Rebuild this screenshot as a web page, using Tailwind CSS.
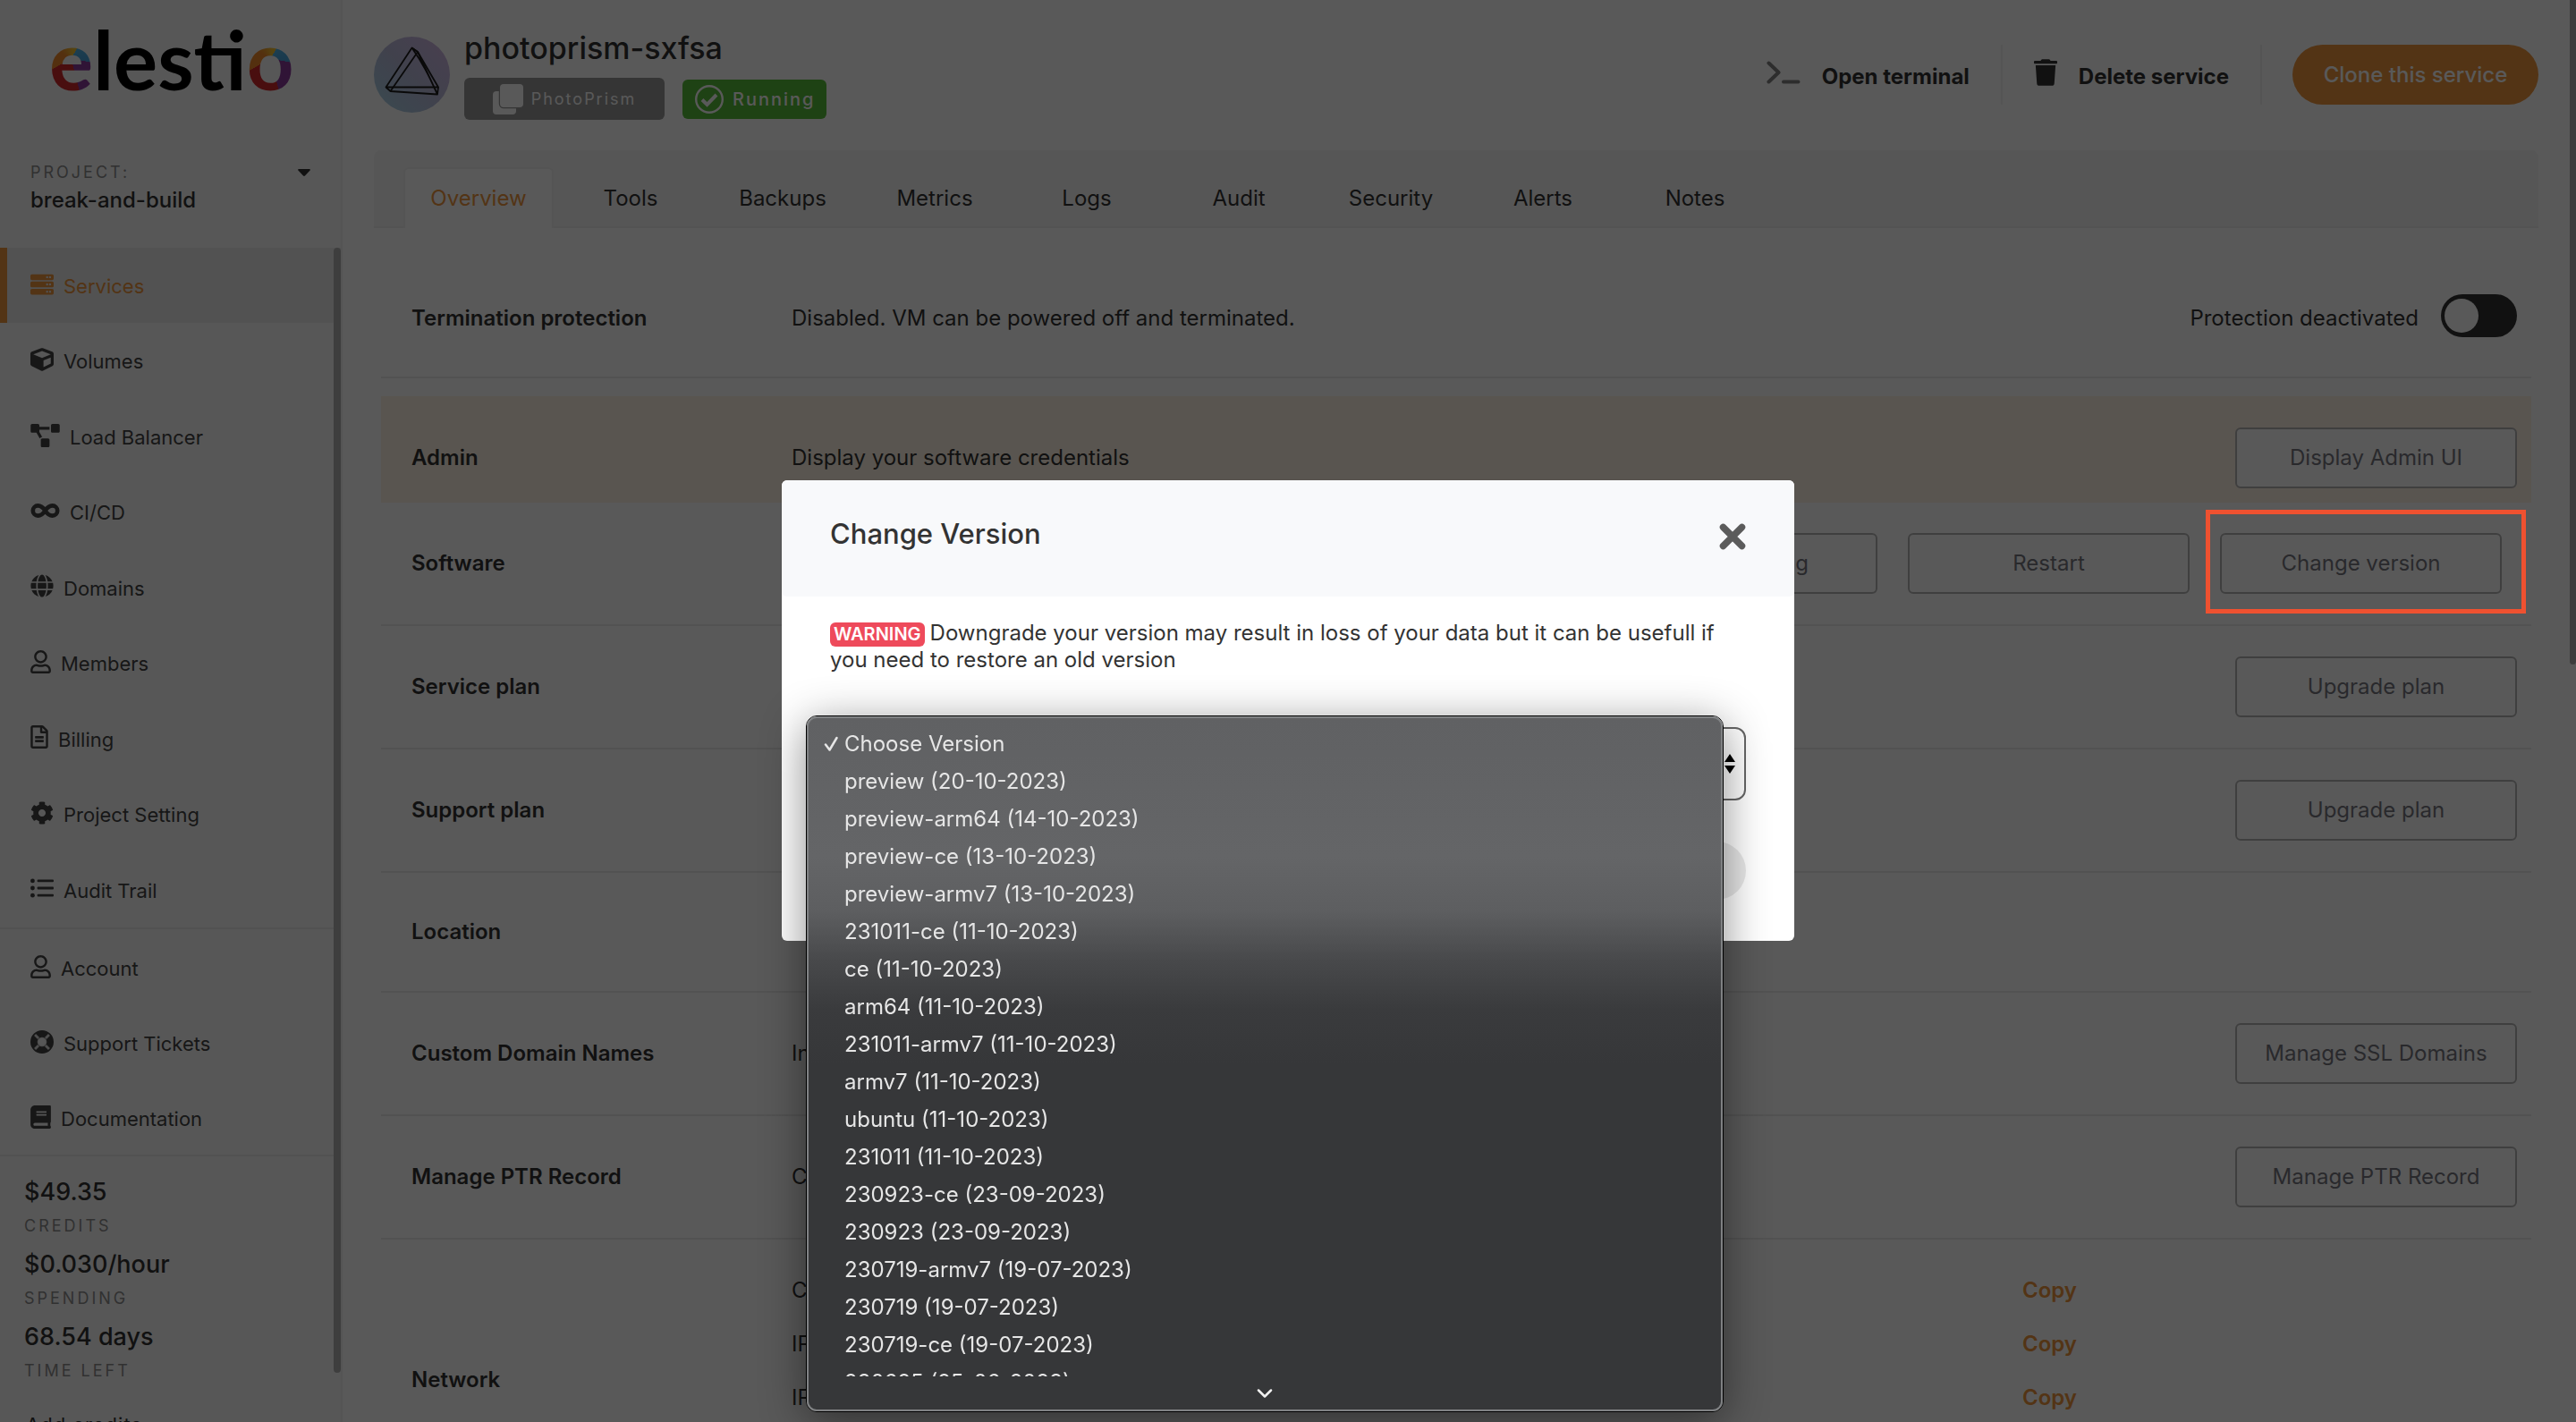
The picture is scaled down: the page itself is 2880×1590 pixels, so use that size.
<!DOCTYPE html>
<html lang="en">
<head>
<meta charset="utf-8">
<title>photoprism-sxfsa - Elestio</title>
<script src="https://cdn.jsdelivr.net/npm/@tailwindcss/browser@4"></script>
</head>
<body class="h-screen overflow-hidden bg-white font-['Inter',sans-serif] text-2xl text-[#333]">
<div class="flex h-full">

  <!-- Sidebar -->
  <aside class="relative flex w-[383px] shrink-0 flex-col overflow-hidden border-r-2 border-[#f0f0f0] bg-[#f9f9f9]">
    <div class="flex h-[277px] shrink-0 flex-col pt-[6px]">
      <a href="#" aria-label="elestio" class="ml-[55px] block h-[120px] font-['Lato',sans-serif] text-[92px] leading-[120px] font-bold text-black"><span class="bg-[conic-gradient(from_-60deg,#f08a2c,#f3c02f_70deg,#f3c02f_90deg,#52b4e6_91deg,#4aa3dc_160deg,#8b3a9b_161deg,#8b3a9b_225deg,#d0282c_226deg,#d0282c_300deg,#f08a2c_301deg)] bg-clip-text text-transparent">e</span>lesti<span class="bg-[conic-gradient(from_-60deg,#f08a2c,#f3c02f_70deg,#f3c02f_90deg,#52b4e6_91deg,#4aa3dc_160deg,#8b3a9b_161deg,#8b3a9b_225deg,#d0282c_226deg,#d0282c_300deg,#f08a2c_301deg)] bg-clip-text text-transparent">o</span></a>
      <button type="button" class="mt-[52px] ml-[34px] mr-[34px] flex items-start justify-between text-left">
        <span class="flex flex-col">
          <span class="text-lg leading-[30px] tracking-[3px] text-[#8c8c8c]">PROJECT:</span>
          <span class="text-2xl leading-[32px] font-medium">break-and-build</span>
        </span>
        <svg class="mt-[11px] h-2 w-[14px]" viewBox="0 0 14 8" fill="currentColor"><path d="M1 0h12c.8 0 1.200 1 .6 1.500L8 7.500c-.6.6-1.400.6-2 0L.4 1.500C-.2 1 .2 0 1 0z"/></svg>
      </button>
    </div>

    <nav class="shrink-0 text-[22px] text-[#444]">
      <div class="grid h-[762px] auto-rows-fr border-b-2 border-[#ececec]">
        <a href="#" class="flex items-center gap-[11px] border-l-8 border-[#ed943c] bg-[#ebebeb] pt-[3px] pl-[26px] text-[#ed943c]">
          <svg class="mb-[6px] h-[26px] w-[26px]" viewBox="0 0 512 512" fill="currentColor"><path fill-rule="evenodd" d="M32 32h448q32 0 32 32v64q0 32-32 32H32q-32 0-32-32V64q0-32 32-32zM344 96a24 24 0 1 0 48 0a24 24 0 1 0-48 0M408 96a24 24 0 1 0 48 0a24 24 0 1 0-48 0M32 192h448q32 0 32 32v64q0 32-32 32H32q-32 0-32-32v-64q0-32 32-32zM344 256a24 24 0 1 0 48 0a24 24 0 1 0-48 0M408 256a24 24 0 1 0 48 0a24 24 0 1 0-48 0M32 352h448q32 0 32 32v64q0 32-32 32H32q-32 0-32-32v-64q0-32 32-32zM344 416a24 24 0 1 0 48 0a24 24 0 1 0-48 0M408 416a24 24 0 1 0 48 0a24 24 0 1 0-48 0"/></svg>
          Services</a>
        <a href="#" class="flex items-center gap-[11px] pt-[3px] pl-[34px]">
          <svg class="mb-[6px] h-[26px] w-[26px]" viewBox="0 0 512 512" fill="currentColor"><path d="M239.1 6.3l-208 78c-18.7 7-31.1 25-31.1 45v225.100c0 18.200 10.300 34.800 26.500 42.900l208 104c13.500 6.800 29.400 6.800 42.900 0l208-104c16.300-8.100 26.500-24.800 26.500-42.900V129.300c0-20-12.400-37.900-31.100-44.900l-208-78C262 2.200 250 2.200 239.100 6.300zM256 68.400l192 72v1.100l-192 78-192-78v-1.100l192-72zm32 356V275.500l160-65v133.900l-160 80z"/></svg>
          Volumes</a>
        <a href="#" class="flex items-center gap-[11px] pt-[3px] pl-[34px]">
          <svg class="mb-[6px] h-[26px] w-[33px]" viewBox="0 0 640 512" fill="currentColor"><path d="M384 320H256c-17.670 0-32 14.330-32 32v128c0 17.670 14.330 32 32 32h128c17.670 0 32-14.330 32-32V352c0-17.670-14.330-32-32-32zM192 32c0-17.670-14.330-32-32-32H32C14.330 0 0 14.330 0 32v128c0 17.670 14.330 32 32 32h95.720l73.160 128.040C211.980 300.980 232.400 288 256 288h.28L192 175.510V128h224V64H192V32zM608 0H480c-17.670 0-32 14.330-32 32v128c0 17.670 14.330 32 32 32h128c17.670 0 32-14.330 32-32V32c0-17.670-14.330-32-32-32z"/></svg>
          Load Balancer</a>
        <a href="#" class="flex items-center gap-[11px] pt-[3px] pl-[34px]">
          <svg class="mb-[6px] h-[26px] w-[33px]" viewBox="0 0 640 512" fill="none" stroke="currentColor" stroke-width="92"><path d="M320 256C275 185 225 146 160 146a110 110 0 0 0 0 220C225 366 275 327 320 256C365 185 415 146 480 146a110 110 0 0 1 0 220C415 366 365 327 320 256z"/></svg>
          CI/CD</a>
        <a href="#" class="flex items-center gap-[11px] pt-[3px] pl-[34px]">
          <svg class="mb-[6px] h-[26px] w-[26px]" viewBox="0 0 496 512" fill="currentColor"><path d="M336.5 160C322 70.700 287.800 8 248 8s-74 62.700-88.500 152h177zM152 256c0 22.200 1.200 43.500 3.300 64h185.300c2.100-20.500 3.300-41.800 3.300-64s-1.200-43.500-3.300-64H155.300c-2.100 20.500-3.300 41.800-3.300 64zm324.700-96c-28.600-67.900-86.500-120.400-158-141.600 24.400 33.800 41.200 84.700 50 141.600h108zM177.200 18.400C105.800 39.600 47.800 92.100 19.300 160h108c8.700-56.900 25.500-107.800 49.900-141.600zM487.400 192H372.700c2.100 21 3.300 42.500 3.300 64s-1.200 43-3.300 64h114.600c5.500-20.500 8.600-41.800 8.600-64s-3.100-43.500-8.500-64zM120 256c0-21.500 1.200-43 3.300-64H8.600C3.200 212.500 0 233.800 0 256s3.200 43.500 8.600 64h114.600c-2-21-3.200-42.500-3.200-64zm39.500 96c14.500 89.300 48.700 152 88.500 152s74-62.700 88.500-152h-177zm159.300 141.600c71.400-21.200 129.400-73.700 158-141.600h-108c-8.800 56.900-25.600 107.800-50 141.600zM19.300 352c28.600 67.900 86.500 120.400 158 141.600-24.400-33.800-41.200-84.700-50-141.600h-108z"/></svg>
          Domains</a>
        <a href="#" class="flex items-center gap-[11px] pt-[3px] pl-[34px]">
          <svg class="mb-[6px] h-[26px] w-[23px]" viewBox="0 0 448 512" fill="currentColor"><path d="M313.6 304c-28.700 0-42.500 16-89.600 16-47.100 0-60.800-16-89.600-16C60.200 304 0 364.200 0 438.400V464c0 26.500 21.500 48 48 48h352c26.500 0 48-21.500 48-48v-25.600c0-74.200-60.200-134.400-134.400-134.400zM400 464H48v-25.600c0-47.600 38.800-86.400 86.400-86.400 14.600 0 38.300 16 89.600 16 51.700 0 74.900-16 89.600-16 47.600 0 86.400 38.800 86.400 86.400V464zM224 288c79.500 0 144-64.500 144-144S303.500 0 224 0 80 64.500 80 144s64.500 144 144 144zm0-240c52.900 0 96 43.100 96 96s-43.100 96-96 96-96-43.100-96-96 43.100-96 96-96z"/></svg>
          Members</a>
        <a href="#" class="flex items-center gap-[11px] pt-[3px] pl-[34px]">
          <svg class="mb-[6px] h-[26px] w-5" viewBox="0 0 384 512" fill="currentColor"><path d="M288 248v28c0 6.600-5.400 12-12 12H108c-6.600 0-12-5.400-12-12v-28c0-6.600 5.400-12 12-12h168c6.600 0 12 5.400 12 12zm-12 72H108c-6.600 0-12 5.400-12 12v28c0 6.600 5.400 12 12 12h168c6.600 0 12-5.400 12-12v-28c0-6.600-5.400-12-12-12zm108-188.100V464c0 26.500-21.500 48-48 48H48c-26.500 0-48-21.500-48-48V48C0 21.500 21.500 0 48 0h204.100C264.800 0 277 5.100 286 14.100L369.900 98c9 8.900 14.100 21.200 14.100 33.900zm-128-80V128h76.100L256 51.900zM336 464V176H232c-13.300 0-24-10.700-24-24V48H48v416h288z"/></svg>
          Billing</a>
        <a href="#" class="flex items-center gap-[11px] pt-[3px] pl-[34px]">
          <svg class="mb-[6px] h-[26px] w-[26px]" viewBox="0 0 512 512" fill="currentColor"><path d="M487.4 315.700l-42.600-24.600c4.300-23.200 4.300-47 0-70.200l42.600-24.600c4.900-2.800 7.100-8.600 5.500-14-11.100-35.600-30-67.800-54.700-94.600-3.800-4.100-10-5.100-14.800-2.300L380.800 110c-17.900-15.400-38.500-27.300-60.800-35.100V25.800c0-5.600-3.900-10.500-9.400-11.700-36.700-8.200-74.300-7.800-109.200 0-5.500 1.200-9.400 6.100-9.400 11.700V75c-22.200 7.900-42.800 19.800-60.800 35.100L88.700 85.500c-4.900-2.800-11-1.900-14.800 2.300-24.700 26.700-43.600 58.900-54.700 94.600-1.700 5.400.6 11.200 5.500 14L67.300 221c-4.300 23.200-4.300 47 0 70.200l-42.600 24.600c-4.900 2.800-7.100 8.600-5.500 14 11.100 35.600 30 67.800 54.700 94.600 3.800 4.100 10 5.100 14.800 2.300l42.600-24.600c17.900 15.400 38.500 27.300 60.800 35.100v49.200c0 5.600 3.900 10.500 9.400 11.700 36.700 8.200 74.300 7.800 109.200 0 5.500-1.200 9.400-6.100 9.400-11.700v-49.200c22.200-7.900 42.800-19.800 60.800-35.100l42.600 24.600c4.900 2.800 11 1.900 14.800-2.300 24.700-26.700 43.600-58.900 54.700-94.600 1.500-5.500-.7-11.300-5.600-14.100zM256 336c-44.100 0-80-35.900-80-80s35.900-80 80-80 80 35.900 80 80-35.900 80-80 80z"/></svg>
          Project Setting</a>
        <a href="#" class="flex items-center gap-[11px] pt-[3px] pl-[34px]">
          <svg class="mb-[6px] h-[26px] w-[26px]" viewBox="0 0 512 512" fill="currentColor"><circle cx="48" cy="96" r="48"/><circle cx="48" cy="256" r="48"/><circle cx="48" cy="416" r="48"/><rect x="150" y="68" width="362" height="56" rx="20"/><rect x="150" y="228" width="362" height="56" rx="20"/><rect x="150" y="388" width="362" height="56" rx="20"/></svg>
          Audit Trail</a>
      </div>
      <div class="grid h-[254px] auto-rows-fr border-b-2 border-[#ececec]">
        <a href="#" class="flex items-center gap-[11px] pt-[6px] pl-[34px]">
          <svg class="mb-[6px] h-[26px] w-[23px]" viewBox="0 0 448 512" fill="currentColor"><path d="M313.6 304c-28.700 0-42.500 16-89.600 16-47.100 0-60.800-16-89.600-16C60.200 304 0 364.200 0 438.400V464c0 26.500 21.500 48 48 48h352c26.500 0 48-21.500 48-48v-25.600c0-74.200-60.200-134.400-134.400-134.400zM400 464H48v-25.600c0-47.600 38.800-86.400 86.400-86.400 14.600 0 38.300 16 89.600 16 51.700 0 74.900-16 89.600-16 47.600 0 86.400 38.800 86.400 86.400V464zM224 288c79.500 0 144-64.500 144-144S303.500 0 224 0 80 64.500 80 144s64.500 144 144 144zm0-240c52.900 0 96 43.100 96 96s-43.100 96-96 96-96-43.100-96-96 43.100-96 96-96z"/></svg>
          Account</a>
        <a href="#" class="flex items-center gap-[11px] pt-[6px] pl-[34px]">
          <svg class="mb-[6px] h-[26px] w-[26px]" viewBox="0 0 512 512" fill="none"><circle cx="256" cy="256" r="176" stroke="currentColor" stroke-width="160"/><g stroke="#dedede" stroke-width="56"><path d="M100 100l78 78M412 100l-78 78M100 412l78-78M412 412l-78-78"/><circle cx="256" cy="256" r="92" stroke-width="24"/></g></svg>
          Support Tickets</a>
        <a href="#" class="flex items-center gap-[11px] pt-[6px] pl-[34px]">
          <svg class="mb-[6px] h-[26px] w-[23px]" viewBox="0 0 448 512" fill="currentColor"><path d="M448 360V24c0-13.300-10.700-24-24-24H96C43 0 0 43 0 96v320c0 53 43 96 96 96h328c13.300 0 24-10.700 24-24v-16c0-7.500-3.500-14.300-8.900-18.700-4.200-15.400-4.200-59.300 0-74.700 5.400-4.300 8.900-11.100 8.900-18.600zM128 134c0-3.300 2.700-6 6-6h212c3.300 0 6 2.700 6 6v20c0 3.300-2.700 6-6 6H134c-3.300 0-6-2.700-6-6v-20zm0 64c0-3.300 2.700-6 6-6h212c3.300 0 6 2.700 6 6v20c0 3.300-2.700 6-6 6H134c-3.300 0-6-2.700-6-6v-20zm253.400 250H96c-17.700 0-32-14.300-32-32 0-17.600 14.400-32 32-32h285.400c-1.900 17.100-1.900 46.900 0 64z"/></svg>
          Documentation</a>
      </div>
    </nav>

    <dl class="flex shrink-0 flex-col gap-[5px] pt-[18px] pl-[27px]">
      <div class="flex flex-col-reverse"><dt class="text-lg leading-8 tracking-[3px] text-[#8c8c8c]">CREDITS</dt><dd class="text-[27px] leading-[44px] font-medium">$49.35</dd></div>
      <div class="flex flex-col-reverse"><dt class="text-lg leading-8 tracking-[3px] text-[#8c8c8c]">SPENDING</dt><dd class="text-[27px] leading-[44px] font-medium">$0.030/hour</dd></div>
      <div class="flex flex-col-reverse"><dt class="text-lg leading-8 tracking-[3px] text-[#8c8c8c]">TIME LEFT</dt><dd class="text-[27px] leading-[44px] font-medium">68.54 days</dd></div>
    </dl>
    <a href="#" class="mt-7 ml-[29px] shrink-0 text-[22px] leading-8 tracking-[1px]">Add credits</a>
    <div class="absolute top-[277px] right-0 bottom-[55px] w-2 rounded-full bg-[#b3b3b3]"></div>
  </aside>

  <!-- Service page -->
  <main class="min-w-0 flex-1 overflow-hidden pr-[42px] pl-[35px]">
    <header class="flex h-[168px] items-start justify-between pt-8">
      <div class="flex gap-4">
        <svg class="mt-[9px] h-[85px] w-[85px]" viewBox="0 0 85 85" fill="none"><defs><linearGradient id="lens" x1="0" y1="1" x2="1" y2="0"><stop offset="0" stop-color="#a5d3e4"/><stop offset=".5" stop-color="#b9bbdb"/><stop offset="1" stop-color="#d2b4e2"/></linearGradient></defs><circle cx="42.500" cy="42.500" r="42.500" fill="url(#lens)"/><g stroke="#1c1c1c" stroke-width="1.800" stroke-linejoin="round"><path d="M42.500 12.500L13.500 56.500H72L49 17z"/><path d="M49 17L18.500 61L71 64.500zM13.500 56.500l5 4.500M72 56.500l-1 8M42.500 12.500l6.500 4.500M42.500 12.500C55 30 62 45 71 64"/></g></svg>
        <div>
          <h1 class="text-[34px] leading-[44px] font-medium">photoprism-sxfsa</h1>
          <div class="mt-[11px] flex items-center gap-5">
            <span class="flex h-[47px] w-[224px] items-center justify-center gap-[9px] rounded-md bg-[#989898] text-lg tracking-[2px] text-white">
              <svg class="h-[34px] w-[34px]" viewBox="0 0 34 34" fill="currentColor"><rect y="8" width="26" height="26" rx="4"/><rect x="8" y="0" width="26" height="26" rx="4" stroke="#989898" stroke-width="2.500" paint-order="stroke"/></svg>
              PhotoPrism</span>
            <span class="flex h-11 w-[161px] items-center gap-[10px] rounded-md bg-[#58bc39] pl-[14px] text-xl font-medium tracking-[2px] text-white">
              <svg class="h-8 w-8 shrink-0" viewBox="0 0 32 32" fill="none" stroke="currentColor"><circle cx="16" cy="16" r="14.800" stroke-width="2.400"/><path d="M8 16.500l5.500 5.500L24 11" stroke-width="4"/></svg>
              Running</span>
          </div>
        </div>
      </div>
      <div class="mt-[18px] flex h-[67px] items-stretch">
        <button type="button" class="flex items-center gap-6 border-r-2 border-[#f0f0f0] pt-1 pr-[35px] font-bold">
          <svg class="mb-[10px] h-[26px] w-[38px] text-[#808080]" viewBox="0 0 38 26" fill="none" stroke="currentColor" stroke-width="4" stroke-linecap="round" stroke-linejoin="round"><path d="M2.500 2.500L13.500 13L2.500 23.500M19 23.500h16.500"/></svg>
          Open terminal</button>
        <button type="button" class="flex items-center gap-6 border-r-2 border-[#f0f0f0] px-[35px] pt-1 font-bold">
          <svg class="mb-[10px] h-[30px] w-[26px]" viewBox="0 0 448 512" fill="currentColor"><path d="M16 32h112l14-22q6-10 18-10h128q12 0 18 10l14 22h112q16 0 16 16v28q0 12-16 12H16Q0 88 0 76V48q0-16 16-16zM32 120h384l-24 346q-4 46-48 46H104q-44 0-48-46z"/></svg>
          Delete service</button>
        <button type="button" class="ml-[34px] w-[275px] rounded-full bg-[#ed943c] font-medium text-white">Clone this service</button>
      </div>
    </header>

    <nav class="flex h-[87px] items-end gap-[2px] rounded-t-lg bg-[#f7f7f7] pl-[33px] text-center shadow-[inset_0_-2px_0_#ededed]">
      <a href="#" class="w-[168px] rounded-t-md border-x-2 border-t-2 border-[#f0f0f0] bg-white leading-[66px] text-[#ed943c]">Overview</a>
      <a href="#" class="w-[168px] leading-[66px]">Tools</a>
      <a href="#" class="w-[168px] leading-[66px]">Backups</a>
      <a href="#" class="w-[168px] leading-[66px]">Metrics</a>
      <a href="#" class="w-[168px] leading-[66px]">Logs</a>
      <a href="#" class="w-[168px] leading-[66px]">Audit</a>
      <a href="#" class="w-[168px] leading-[66px]">Security</a>
      <a href="#" class="w-[168px] leading-[66px]">Alerts</a>
      <a href="#" class="w-[168px] leading-[66px]">Notes</a>
    </nav>

    <div class="mx-2">
      <section class="grid h-[168px] grid-cols-[425px_1fr_auto] items-center border-b-2 border-[#ececec] pt-[35px] pr-4 pl-[34px]">
        <h2 class="font-semibold">Termination protection</h2>
        <p>Disabled. VM can be powered off and terminated.</p>
        <label class="flex items-center gap-[25px]">Protection deactivated
          <span class="relative mb-[6px] flex h-12 w-[85px]">
            <input type="checkbox" class="h-12 w-[85px] appearance-none rounded-full bg-[#333]">
            <span class="absolute top-[5px] left-1 h-[38px] w-[38px] rounded-full bg-white"></span>
          </span>
        </label>
      </section>
      <section class="mt-5 grid h-[119px] grid-cols-[425px_1fr_auto] items-center bg-[#fff3e4] pt-[18px] pr-4 pl-[34px]">
        <h2 class="font-semibold">Admin</h2>
        <p>Display your software credentials</p>
        <button type="button" class="h-[68px] w-[315px] rounded-md border-2 border-[#b5b5b5] bg-white text-[#77777f]">Display Admin UI</button>
      </section>
      <section class="grid h-[138px] grid-cols-[425px_1fr_auto] items-center border-b-2 border-[#ececec] pr-4 pl-[34px]">
        <h2 class="font-semibold">Software</h2>
        <p></p>
        <div class="mr-[17px] flex gap-[34px]">
          <button type="button" class="h-[68px] w-[315px] rounded-md border-2 border-[#b5b5b5] bg-white text-[#77777f]">Update config</button>
          <button type="button" class="h-[68px] w-[315px] rounded-md border-2 border-[#b5b5b5] bg-white text-[#77777f]">Restart</button>
          <div class="relative">
            <button type="button" class="h-[68px] w-[315px] rounded-md border-2 border-[#b5b5b5] bg-white text-[#77777f]">Change version</button>
            <!-- Highlight frame, kept above the backdrop -->
            <span class="pointer-events-none absolute -top-[26px] -right-[27px] -bottom-[22px] -left-4 z-20 border-5 border-[#ef5130]"></span>
          </div>
        </div>
      </section>
      <section class="grid h-[138px] grid-cols-[425px_1fr_auto] items-center border-b-2 border-[#ececec] pr-4 pl-[34px]">
        <h2 class="font-semibold">Service plan</h2>
        <p></p>
        <button type="button" class="h-[68px] w-[315px] rounded-md border-2 border-[#b5b5b5] bg-white text-[#77777f]">Upgrade plan</button>
      </section>
      <section class="grid h-[138px] grid-cols-[425px_1fr_auto] items-center border-b-2 border-[#ececec] pr-4 pl-[34px]">
        <h2 class="font-semibold">Support plan</h2>
        <p></p>
        <button type="button" class="h-[68px] w-[315px] rounded-md border-2 border-[#b5b5b5] bg-white text-[#77777f]">Upgrade plan</button>
      </section>
      <section class="grid h-[134px] grid-cols-[425px_1fr_auto] items-center border-b-2 border-[#ececec] pr-4 pl-[34px]">
        <h2 class="font-semibold">Location</h2>
      </section>
      <section class="grid h-[138px] grid-cols-[425px_1fr_auto] items-center border-b-2 border-[#ececec] pr-4 pl-[34px]">
        <h2 class="font-semibold">Custom Domain Names</h2>
        <p>Include</p>
        <button type="button" class="h-[68px] w-[315px] rounded-md border-2 border-[#b5b5b5] bg-white text-[#77777f]">Manage SSL Domains</button>
      </section>
      <section class="grid h-[138px] grid-cols-[425px_1fr_auto] items-center border-b-2 border-[#ececec] pr-4 pl-[34px]">
        <h2 class="font-semibold">Manage PTR Record</h2>
        <p>Configure</p>
        <button type="button" class="h-[68px] w-[315px] rounded-md border-2 border-[#b5b5b5] bg-white text-[#77777f]">Manage PTR Record</button>
      </section>
      <section class="grid h-[314px] grid-cols-[425px_1fr] items-center pr-4 pl-[34px]">
        <h2 class="font-semibold">Network</h2>
        <div class="grid auto-rows-[60px] grid-cols-[1376px_1fr] items-center self-start pt-[27px]">
          <span>CNAME</span><a href="#" class="font-semibold text-[#ed943c]">Copy</a>
          <span>IPV4</span><a href="#" class="font-semibold text-[#ed943c]">Copy</a>
          <span>IPV6</span><a href="#" class="font-semibold text-[#ed943c]">Copy</a>
        </div>
      </section>
    </div>
    <div class="absolute top-0 right-0 h-[743px] w-[7px] rounded-b-full bg-[#b0b0b0]"></div>
  </main>
</div>

<!-- Backdrop -->
<div class="fixed inset-0 z-10 bg-black/65"></div>

<!-- Change version dialog -->
<div class="fixed inset-x-0 top-0 bottom-[2px] z-30 flex items-center justify-center">
  <div role="dialog" aria-labelledby="dialog-title" class="w-[1132px] rounded-md bg-white pb-[46px]">
    <div class="flex h-[130px] items-center justify-between rounded-md bg-[#f8f9fb] px-[54px] pb-1">
      <h2 id="dialog-title" class="mb-[6px] text-[31px] leading-10 font-medium">Change Version</h2>
      <button type="button" aria-label="Close"><svg class="h-[30px] w-[30px]" viewBox="0 0 30 30" stroke="#5b5b5b" stroke-width="7.500" stroke-linecap="round"><path d="M4.500 4.500l21 21M25.500 4.500l-21 21"/></svg></button>
    </div>
    <div class="px-[54px] pt-[26px]">
      <p class="leading-[30px]"><span class="mr-[6px] inline-block rounded-md bg-[#ee4a5b] px-1 text-xl leading-[27px] font-semibold text-white">WARNING</span>Downgrade your version may result in loss of your data but it can be usefull if you need to restore an old version</p>
      <div class="relative mt-[60px]">
        <select aria-label="Version" class="h-[82px] w-full appearance-none rounded-xl border-2 border-[#666] bg-white px-5">
          <option>Choose Version</option>
        </select>
        <svg class="absolute top-[30px] right-3 h-[22px] w-3" viewBox="0 0 12 22"><path d="M6 0l6 9H0zM6 22l6-9H0z"/></svg>

        <!-- Open list of versions -->
        <div class="absolute -top-[13px] -left-[27px] z-10 flex h-[779px] w-[1026px] flex-col rounded-xl border border-black shadow-[0_10px_50px_rgba(0,0,0,0.45)]">
          <div class="flex min-h-0 w-full flex-1 flex-col rounded-[11px] border-2 border-[#808284] bg-[linear-gradient(#606163,#646567_20%,#5d5e60_28%,#48494b_35%,#3a3b3d_42%,#363739_50%)]">
            <ul role="listbox" class="h-[736px] overflow-hidden pt-2 pl-[40px] text-[#e6e6e6]">
              <li role="option" aria-selected="true" class="-ml-[23px] flex h-[42px] items-center gap-[6px]"><svg class="h-[17px] w-[17px]" viewBox="0 0 17 17" fill="none" stroke="currentColor" stroke-width="2.500" stroke-linecap="round" stroke-linejoin="round"><path d="M2 9.500L6.500 15.500L14.500 2"/></svg>Choose Version</li>
              <li role="option" class="flex h-[42px] items-center">preview (20-10-2023)</li>
              <li role="option" class="flex h-[42px] items-center">preview-arm64 (14-10-2023)</li>
              <li role="option" class="flex h-[42px] items-center">preview-ce (13-10-2023)</li>
              <li role="option" class="flex h-[42px] items-center">preview-armv7 (13-10-2023)</li>
              <li role="option" class="flex h-[42px] items-center">231011-ce (11-10-2023)</li>
              <li role="option" class="flex h-[42px] items-center">ce (11-10-2023)</li>
              <li role="option" class="flex h-[42px] items-center">arm64 (11-10-2023)</li>
              <li role="option" class="flex h-[42px] items-center">231011-armv7 (11-10-2023)</li>
              <li role="option" class="flex h-[42px] items-center">armv7 (11-10-2023)</li>
              <li role="option" class="flex h-[42px] items-center">ubuntu (11-10-2023)</li>
              <li role="option" class="flex h-[42px] items-center">231011 (11-10-2023)</li>
              <li role="option" class="flex h-[42px] items-center">230923-ce (23-09-2023)</li>
              <li role="option" class="flex h-[42px] items-center">230923 (23-09-2023)</li>
              <li role="option" class="flex h-[42px] items-center">230719-armv7 (19-07-2023)</li>
              <li role="option" class="flex h-[42px] items-center">230719 (19-07-2023)</li>
              <li role="option" class="flex h-[42px] items-center">230719-ce (19-07-2023)</li>
              <li role="option" class="flex h-[42px] items-center">230625 (25-06-2023)</li>
            </ul>
            <div class="flex flex-1 justify-center pt-[14px]">
              <svg class="h-[10px] w-[18px]" viewBox="0 0 18 10" fill="none" stroke="#f0f0f0" stroke-width="2.500" stroke-linecap="round" stroke-linejoin="round"><path d="M2 1.500l7 7l7-7"/></svg>
            </div>
          </div>
        </div>
      </div>
      <div class="mt-[46px] flex justify-end">
        <button type="button" aria-label="Confirm" class="h-[65px] w-[220px] rounded-full bg-[#e8e8e8]"></button>
      </div>
    </div>
  </div>
</div>
</body>
</html>
